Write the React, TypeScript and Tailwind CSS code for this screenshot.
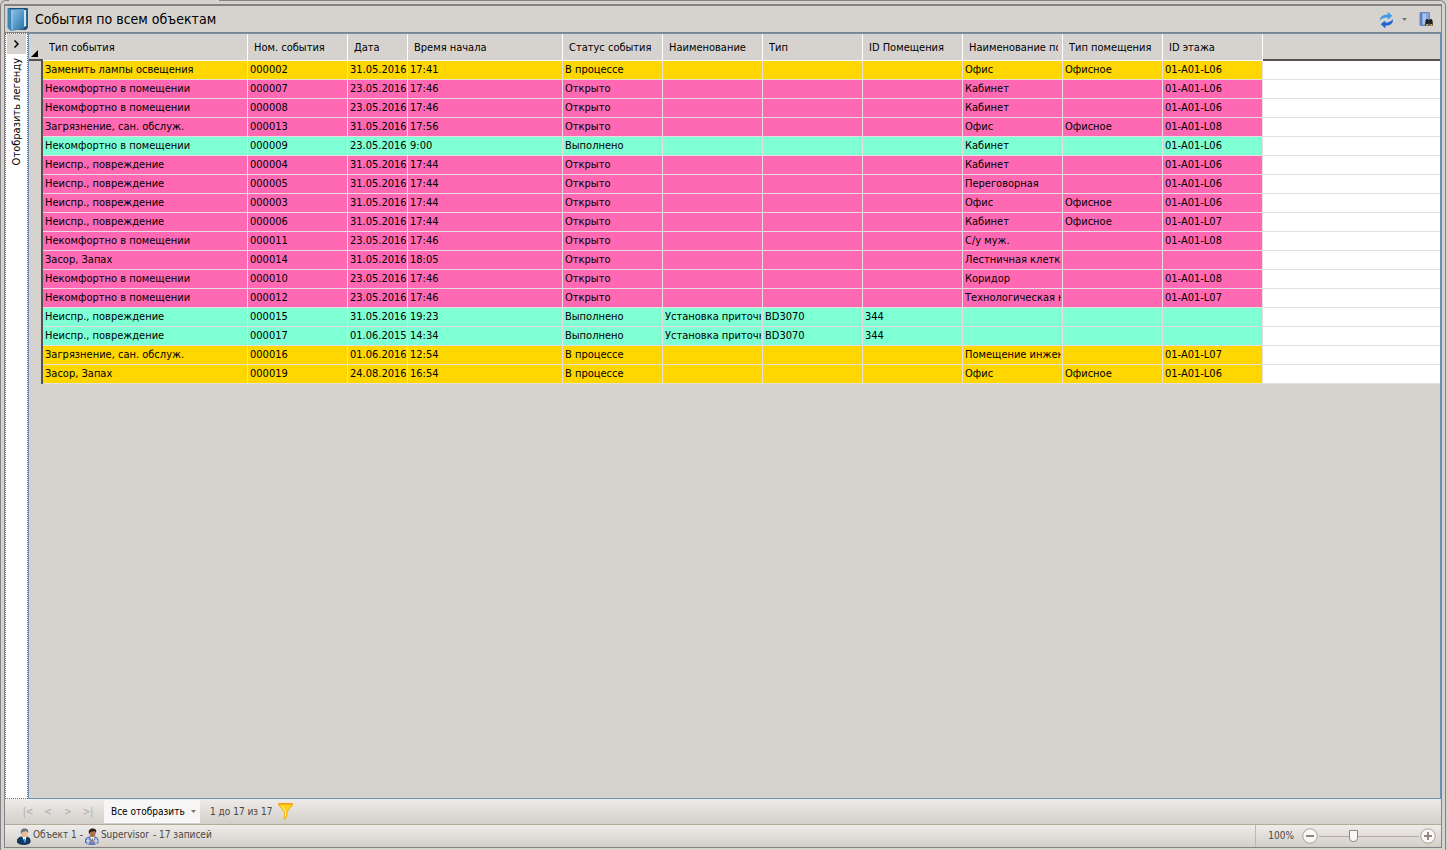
import React, { useState } from 'react';

type Status = 'В процессе' | 'Открыто' | 'Выполнено';

interface EventRow {
  type: string;
  num: string;
  date: string;
  time: string;
  status: Status;
  name?: string;
  kind?: string;
  roomId?: string;
  room?: string;
  roomType?: string;
  floor?: string;
}

const UNCOMF = 'Некомфортно в помещении';
const BROKEN = 'Неиспр., повреждение';
const DIRTY = 'Загрязнение, сан. обслуж.';
const SMELL = 'Засор, Запах';

const rows: EventRow[] = [
  { type: 'Заменить лампы освещения', num: '000002', date: '31.05.2016', time: '17:41', status: 'В процессе', room: 'Офис', roomType: 'Офисное', floor: '01-A01-L06' },
  { type: UNCOMF, num: '000007', date: '23.05.2016', time: '17:46', status: 'Открыто', room: 'Кабинет', floor: '01-A01-L06' },
  { type: UNCOMF, num: '000008', date: '23.05.2016', time: '17:46', status: 'Открыто', room: 'Кабинет', floor: '01-A01-L06' },
  { type: DIRTY, num: '000013', date: '31.05.2016', time: '17:56', status: 'Открыто', room: 'Офис', roomType: 'Офисное', floor: '01-A01-L08' },
  { type: UNCOMF, num: '000009', date: '23.05.2016', time: '9:00', status: 'Выполнено', room: 'Кабинет', floor: '01-A01-L06' },
  { type: BROKEN, num: '000004', date: '31.05.2016', time: '17:44', status: 'Открыто', room: 'Кабинет', floor: '01-A01-L06' },
  { type: BROKEN, num: '000005', date: '31.05.2016', time: '17:44', status: 'Открыто', room: 'Переговорная', floor: '01-A01-L06' },
  { type: BROKEN, num: '000003', date: '31.05.2016', time: '17:44', status: 'Открыто', room: 'Офис', roomType: 'Офисное', floor: '01-A01-L06' },
  { type: BROKEN, num: '000006', date: '31.05.2016', time: '17:44', status: 'Открыто', room: 'Кабинет', roomType: 'Офисное', floor: '01-A01-L07' },
  { type: UNCOMF, num: '000011', date: '23.05.2016', time: '17:46', status: 'Открыто', room: 'С/у муж.', floor: '01-A01-L08' },
  { type: SMELL, num: '000014', date: '31.05.2016', time: '18:05', status: 'Открыто', room: 'Лестничная клетка' },
  { type: UNCOMF, num: '000010', date: '23.05.2016', time: '17:46', status: 'Открыто', room: 'Коридор', floor: '01-A01-L08' },
  { type: UNCOMF, num: '000012', date: '23.05.2016', time: '17:46', status: 'Открыто', room: 'Технологическая н', floor: '01-A01-L07' },
  { type: BROKEN, num: '000015', date: '31.05.2016', time: '19:23', status: 'Выполнено', name: 'Установка приточн', kind: 'BD3070', roomId: '344' },
  { type: BROKEN, num: '000017', date: '01.06.2015', time: '14:34', status: 'Выполнено', name: 'Установка приточн', kind: 'BD3070', roomId: '344' },
  { type: DIRTY, num: '000016', date: '01.06.2016', time: '12:54', status: 'В процессе', room: 'Помещение инжен', floor: '01-A01-L07' },
  { type: SMELL, num: '000019', date: '24.08.2016', time: '16:54', status: 'В процессе', room: 'Офис', roomType: 'Офисное', floor: '01-A01-L06' },
];

const columns: { key: keyof EventRow; label: string; width: string }[] = [
  { key: 'type', label: 'Тип события', width: 'w-[205px]' },
  { key: 'num', label: 'Ном. события', width: 'w-[100px]' },
  { key: 'date', label: 'Дата', width: 'w-[60px]' },
  { key: 'time', label: 'Время начала', width: 'w-[155px]' },
  { key: 'status', label: 'Статус события', width: 'w-[100px]' },
  { key: 'name', label: 'Наименование', width: 'w-[100px]' },
  { key: 'kind', label: 'Тип', width: 'w-[100px]' },
  { key: 'roomId', label: 'ID Помещения', width: 'w-[100px]' },
  { key: 'room', label: 'Наименование по', width: 'w-[100px]' },
  { key: 'roomType', label: 'Тип помещения', width: 'w-[100px]' },
  { key: 'floor', label: 'ID этажа', width: 'w-[100px]' },
];

const rowColor: Record<Status, string> = {
  'В процессе': 'bg-[#ffd700]',
  'Открыто': 'bg-[#ff69b4]',
  'Выполнено': 'bg-[#7fffd4]',
};

const BookIcon = () => (
  <svg width="22" height="25" viewBox="0 0 22 25" aria-hidden="true">
    <defs>
      <linearGradient id="cover" x1="0" y1="0" x2="1" y2="1">
        <stop offset="0" stopColor="#8fc4e6" />
        <stop offset="0.5" stopColor="#5a9dcb" />
        <stop offset="1" stopColor="#2d6f9f" />
      </linearGradient>
    </defs>
    <path d="M1 1h19.500l.5 1v18c0 1-2 3-3 3H5z" fill="#1d4f78" />
    <path d="M17 3h2v16l-2 1z" fill="#cfe3f0" />
    <path d="M19 2h1.500v18H19z" fill="#2b6c9c" />
    <path d="M.5 1L4 2v22l-3.500-3z" fill="#3c84b6" />
    <path d="M4 2.500L17 2v20L4 24z" fill="url(#cover)" />
    <path d="M5 4v18.500" stroke="#a9d3ec" opacity=".7" />
  </svg>
);

const RefreshIcon = () => (
  <svg width="15" height="16" viewBox="0 0 15 16" className="mt-0.5" aria-hidden="true">
    <g transform="rotate(-12 7.500 8)">
      <path d="M1 7C1.500 3.500 5 1.500 9.500 3L10.500 0.500 14 5 9.500 8 9 6C6.500 5 4 5.500 1 7z" fill="#3f9be6" />
      <path d="M14 8.500C13.500 12.500 10 14.500 5.500 13.300L4.500 15.800 1 11 5.500 8.300 6 10.300C8.500 11 11 10.500 14 8.500z" fill="#1f66cf" />
    </g>
  </svg>
);

const FindIcon = () => (
  <svg width="14" height="15" viewBox="0 0 14 15" aria-hidden="true">
    <path d="M1 .5h9.500v13H1z" fill="#86a6de" stroke="#6d88bd" />
    <path d="M1 .5h2v13H1z" fill="#5f7fbd" />
    <path d="M4 2h3v10H4z" fill="#a9c3ee" />
    <path d="M6.500 8.500l1-1.500h1.500l.5 1h1l.5-1h1.500l1 1.500.5 5h-3.500v-2h-1v2H6z" fill="#24211c" />
    <path d="M7 12h2v1.500H7zM11.300 12h2v1.500h-2z" fill="#e0b030" />
  </svg>
);

const FunnelIcon = () => (
  <svg width="15" height="17" viewBox="0 0 15 17" aria-hidden="true">
    <path d="M.5.500h14v1.500L9 9v4.500L6.500 16.500V9L.5 2z" fill="#ffd21e" stroke="#f5ae1c" />
    <path d="M.5 1h14" stroke="#e8901a" />
    <path d="M4 4l3.500 4.500V13" stroke="#fff0a0" fill="none" />
  </svg>
);

const PersonIcon = ({ dark }: { dark?: boolean }) => (
  <svg width="14" height="17" viewBox="0 0 14 17" aria-hidden="true">
    <path d="M.5 14.500v-2c0-2 2-3.500 4.500-3.500h4c2.500 0 4 1.500 4 3.500v2c-2 2.500-10.500 2.500-12.500 0z" fill={dark ? '#123b63' : '#6b89cb'} stroke={dark ? '#0f2b49' : '#4564a8'} />
    <path d="M5 8.500h4.500l-1.500 6z" fill="#fff" />
    <path d="M7.500 10l1 2-.5 3.500-1.500-3.500z" fill={dark ? '#4a94d6' : '#c9662c'} />
    {!dark && <path d="M3 10v6M11 10v6M1 13h4M9 13h4" stroke="#e6edfb" />}
    <ellipse cx="7.500" cy="5.500" rx="3" ry="3.800" fill={dark ? '#e9bd94' : '#a9744d'} />
    <path d="M4 6C3 2 5 .5 7.500 .5s4.500 1 3.500 4.500L9.500 3 5.500 4z" fill={dark ? '#66757f' : '#2b211c'} />
  </svg>
);

const Caret = () => (
  <svg width="5" height="3" viewBox="0 0 5 3" aria-hidden="true">
    <path d="M0 0h5L2.500 3z" fill="#79746c" />
  </svg>
);

const ZoomIcon = ({ plus }: { plus?: boolean }) => (
  <svg width="16" height="16" viewBox="0 0 16 16" aria-hidden="true">
    <circle cx="8" cy="8" r="7.200" fill="#faf8f7" stroke="#aaa195" />
    <path d={plus ? 'M4 8h8M8 4v8' : 'M4 8h8'} stroke="#918779" strokeWidth="2" />
  </svg>
);

const PAGER = [
  { label: 'Первая страница', text: '|<' },
  { label: 'Предыдущая страница', text: '<' },
  { label: 'Следующая страница', text: '>' },
  { label: 'Последняя страница', text: '>|' },
];

function EventTable() {
  return (
    <table className="w-full table-fixed border-separate border-spacing-0 text-black">
      <colgroup>
        <col className="w-[14px]" />
        {columns.map((c) => (
          <col key={c.key} className={c.width} />
        ))}
        <col />
      </colgroup>
      <thead>
        <tr className="h-[27px]">
          <td className="border-b-2 border-[#55524f] p-0 align-bottom">
            <svg width="10" height="9" viewBox="0 0 10 9" aria-hidden="true">
              <path d="M9 0v7H2z" fill="#000" />
            </svg>
          </td>
          {columns.map((c) => (
            <th key={c.key} className="overflow-hidden whitespace-nowrap border-b border-r border-white pb-0 pl-1.5 pr-1 pt-0.5 text-left font-normal">
              <div className="overflow-hidden">{c.label}</div>
            </th>
          ))}
          <td className="border-b-2 border-[#55524f] p-0" />
        </tr>
      </thead>
      <tbody>
        {rows.map((row) => (
          <tr key={row.num} className="h-[19px]">
            <td className="border-r-2 border-[#55524f] p-0" />
            {columns.map((c) => (
              <td key={c.key} className={`border-b border-r border-[#e6dede] py-0 pl-0.5 pr-px leading-[18px] ${rowColor[row.status]}`}>
                <div className="h-[18px] overflow-hidden whitespace-nowrap">{row[c.key]}</div>
              </td>
            ))}
            <td className="border-b border-[#e6dede] bg-white p-0" />
          </tr>
        ))}
      </tbody>
    </table>
  );
}

export default function App() {
  const [zoom, setZoom] = useState(100);

  return (
    <div className="h-screen bg-[#d6d3ce] pr-0.5 font-['DejaVu_Sans_Condensed','Noto_Sans',sans-serif] text-[11px] leading-4">
      <div className="relative flex h-full flex-col rounded-t-md border-x border-t border-[#848284] px-[3px] pb-0.5 pt-[3px]">
        <div className="absolute -top-px left-2 h-px w-[210px] bg-[#d6d3ce]" />
        <div className="flex min-h-0 flex-1 flex-col border-x border-b border-t-2 border-[#848284]">
          <header className="flex h-[27px] shrink-0 items-center border-b border-[#848284] pl-0.5 pr-2">
            <BookIcon />
            <h1 className="ml-1.5 flex-1 text-[14px] text-black">События по всем объектам</h1>
            <button type="button" aria-label="Обновить"><RefreshIcon /></button>
            <button type="button" aria-label="Параметры обновления" className="ml-2 mr-3"><Caret /></button>
            <button type="button" aria-label="Найти"><FindIcon /></button>
          </header>

          <main className="flex min-h-0 flex-1">
            <aside className="flex w-[23px] shrink-0 flex-col items-center border border-dotted border-[#77736f] bg-white">
              <button type="button" aria-label="Развернуть" className="flex h-5 w-[19px] items-center justify-center bg-[#d6d3ce]">
                <svg width="5" height="8" viewBox="0 0 5 8" aria-hidden="true">
                  <path d="M.5.500L4 4 .5 7.500" fill="none" stroke="#000" strokeWidth="1.500" />
                </svg>
              </button>
              <span className="mt-1 rotate-180 whitespace-nowrap text-black [writing-mode:vertical-rl]">Отобразить легенду</span>
            </aside>
            <section className="min-w-0 flex-1 overflow-hidden border border-[#6d92b5]">
              <EventTable />
            </section>
          </main>

          <nav className="flex h-[26px] shrink-0 items-center border-b border-[#b1ab98] bg-linear-to-b from-[#eeebea] to-[#d3cfc8] text-[10px] text-[#4b4742]">
            <div className="flex w-[99px] items-center justify-end gap-2 pr-2.5 text-[#b0a99f]">
              {PAGER.map((p) => (
                <button key={p.label} type="button" aria-label={p.label} disabled className="w-3 whitespace-nowrap">
                  {p.text}
                </button>
              ))}
            </div>
            <div className="flex h-[23px] w-24 items-center bg-[#f7f6f6] pr-1">
              <select aria-label="Режим отображения" className="h-full min-w-0 flex-1 appearance-none pl-[7px] text-black">
                <option>Все отобразить</option>
              </select>
              <Caret />
            </div>
            <span className="ml-2.5 mr-1.5">1 до 17 из 17</span>
            <button type="button" aria-label="Фильтр"><FunnelIcon /></button>
          </nav>

          <footer className="flex h-[22px] shrink-0 items-center bg-linear-to-b from-[#eeebea] to-[#d3cfc8] text-[10px] text-[#4b4742]">
            <div className="flex flex-1 items-center pl-3">
              <PersonIcon dark />
              <span className="ml-0.5 mr-0.5 pb-0.5">Объект 1 -</span>
              <PersonIcon />
              <span className="ml-0.5 pb-0.5">Supervisor</span>
              <span className="ml-1 pb-0.5">- 17 записей</span>
            </div>
            <div className="flex h-full items-center border-l border-[#bdb8ae] pl-3 pr-[5px]">
              <span className="mr-2">{zoom}%</span>
              <button type="button" aria-label="Уменьшить" onClick={() => setZoom(Math.max(10, zoom - 10))}><ZoomIcon /></button>
              <input
                type="range"
                aria-label="Масштаб"
                min={10}
                max={280}
                value={zoom}
                onChange={(e) => setZoom(Number(e.target.value))}
                className="mx-px h-4 w-[100px] appearance-none bg-transparent [&::-webkit-slider-runnable-track]:h-px [&::-webkit-slider-runnable-track]:bg-[#b9aca5] [&::-webkit-slider-thumb]:-mt-1.5 [&::-webkit-slider-thumb]:h-3 [&::-webkit-slider-thumb]:w-[9px] [&::-webkit-slider-thumb]:appearance-none [&::-webkit-slider-thumb]:rounded-b-sm [&::-webkit-slider-thumb]:border [&::-webkit-slider-thumb]:border-[#8f8678] [&::-webkit-slider-thumb]:bg-[#faf8f7]"
              />
              <button type="button" aria-label="Увеличить" onClick={() => setZoom(Math.min(280, zoom + 10))}><ZoomIcon plus /></button>
            </div>
          </footer>
        </div>
      </div>
    </div>
  );
}
